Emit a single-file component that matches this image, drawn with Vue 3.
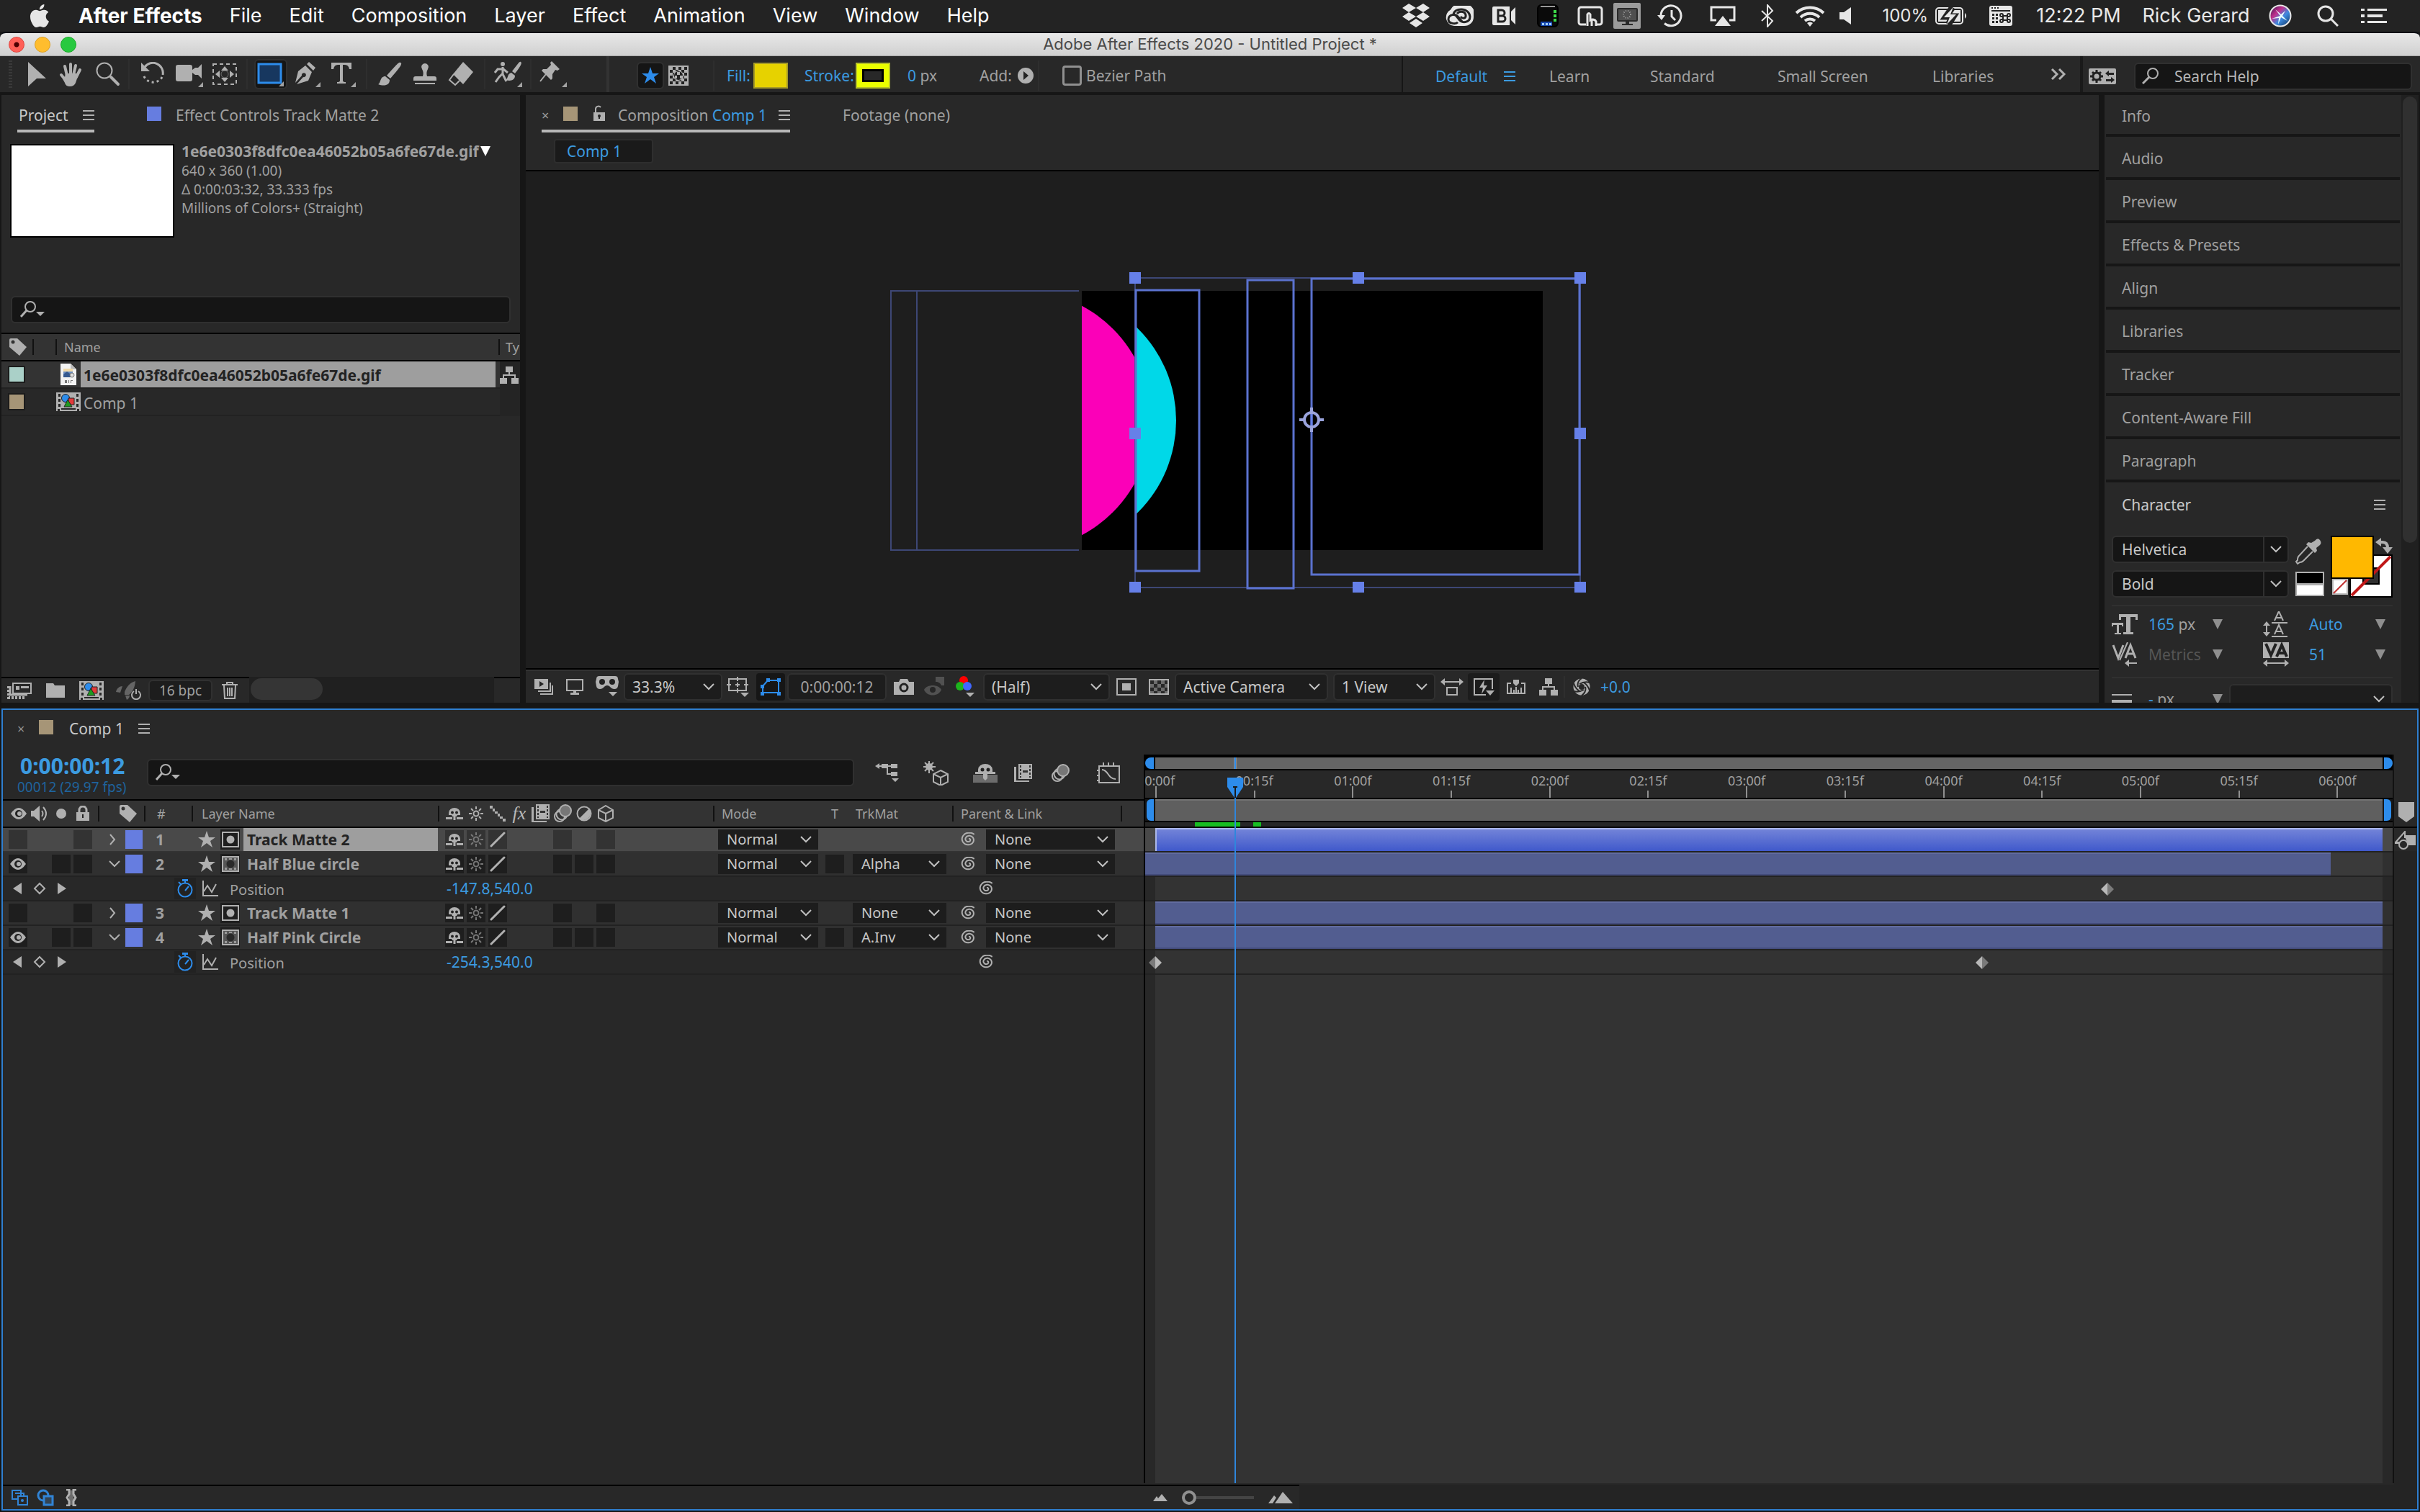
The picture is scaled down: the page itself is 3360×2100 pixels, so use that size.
<script setup>
import { h } from 'vue'

const S = 'fill="none" stroke="currentColor"'
const checker = (x, y, c, r, s) => {
  let out = ''
  for (let j = 0; j < r; j++)
    for (let i = 0; i < c; i++)
      if ((i + j) % 2) out += `<rect x="${x + i * s}" y="${y + j * s}" width="${s}" height="${s}"/>`
  return out
}
const spiral = (cx, cy, rx, ry, turns, end) => {
  const pts = []
  for (let i = 0; i <= 60; i++) {
    const f = 0.1 + (0.9 * i) / 60
    const a = end - (1 - i / 60) * turns * Math.PI * 2
    pts.push(`${(cx + Math.cos(a) * rx * f).toFixed(1)} ${(cy + Math.sin(a) * ry * f).toFixed(1)}`)
  }
  return 'M' + pts.join('L')
}
const corner = (x, y) => `<path d="M${x} ${y}v-7l-7 7z" opacity=".9"/>`
const film = '<path d="M0 0h34v26h-34z"/><path fill="#282828" d="M3 2h3v4h-3zM3 9h3v4h-3zM3 16h3v4h-3zM28 2h3v4h-3zM28 9h3v4h-3zM28 16h3v4h-3zM2 23h3v3h-3zM29 23h3v3h-3zM7 22h20v2h-20z"/><circle cx="13" cy="8" r="5.500" fill="#2d8ceb" stroke="#222"/><path fill="#e23b3b" stroke="#222" d="M17 8h8v9h-8z"/><path fill="#1f9a1f" stroke="#222" d="M16 10l6 10h-11z"/>'
const ghost = '<path d="M4 11V8a8 7 0 0 1 16 0v3h-4l-1 2h-1.500v5h-3v-5H9l-1-2z"/><path d="M0 14h9v3H0zM15 14h9v3h-9z"/><circle cx="9" cy="7.500" r="2" fill="#222"/><circle cx="15" cy="7.500" r="2" fill="#222"/>'
const sun = `<g ${S} stroke-width="2"><circle cx="10" cy="10" r="3.500"/><path d="M10 0v4M10 16v4M0 10h4M16 10h4M3 3l3 3M14 14l3 3M17 3l-3 3M6 14l-3 3"/></g>`
const blur = `<g ${S} stroke-width="2"><circle cx="9" cy="17" r="7"/><circle cx="12" cy="14" r="7.500"/></g><circle cx="17" cy="9" r="8" fill="#777" stroke="currentColor" stroke-width="2"/>`
const frames = '<path d="M7 0h19v21H7z"/><path d="M1 4h3v19h18v2H1z"/><path fill="#333" d="M9 2h2v3H9zM9 7h2v3H9zM9 12h2v3H9zM9 17h2v2H9zM22 2h2v3h-2zM22 7h2v3h-2zM22 12h2v3h-2zM22 17h2v2h-2zM13 9h7v3h-7z"/>'

const icons = {
  apple: [32, 32, '<g transform="scale(1.333)"><path d="M12.152 6.896c-.948 0-2.415-1.078-3.96-1.04-2.04.027-3.91 1.183-4.961 3.014-2.117 3.675-.546 9.103 1.519 12.09 1.013 1.454 2.208 3.09 3.792 3.039 1.52-.065 2.09-.987 3.935-.987 1.831 0 2.35.987 3.96.948 1.637-.026 2.676-1.48 3.676-2.948 1.156-1.688 1.636-3.325 1.662-3.415-.039-.013-3.182-1.221-3.22-4.857-.026-3.04 2.48-4.494 2.597-4.559-1.429-2.09-3.623-2.324-4.39-2.376-2-.156-3.675 1.09-4.61 1.09zM15.53 3.83c.843-1.012 1.4-2.427 1.245-3.83-1.207.052-2.662.805-3.532 1.818-.78.896-1.454 2.338-1.273 3.714 1.338.104 2.715-.688 3.559-1.701"/></g>'],
  dropbox: [38, 34, '<path d="M9 0l10 6-10 6-9-6zM29 0l9 6-9 6-10-6zM9 12l10 6-10 6-9-6zM29 12l9 6-9 6-10-6zM19 21l9 6-9 6-9-6z"/>'],
  cc: [40, 28, '<path d="M13 28a12 12 0 0 1-5-22.500A16 12 0 0 1 40 13v3a13 12 0 0 1-13 12z"/><g fill="none" stroke="#232323" stroke-width="3"><path d="M18 23c-3 3-13 2-13-4 0-7 10-9 14-3l5 6"/><path d="M12 13c0-11 22-11 23 2 0 9-12 10-16 3l-4-5"/><path d="M17 11c4-5 13-3 12 4-1 3-5 3-7 0"/></g>'],
  bomb: [32, 26, '<path d="M2 0h22v26H2a2 2 0 0 1-2-2V2a2 2 0 0 1 2-2zM26 7l6-6v24l-6-6z"/><path fill="none" stroke="#232323" stroke-width="3" d="M8 5v16h6a4 4 0 0 0 0-8h-6h5a4 4 0 0 0 0-8z"/>'],
  drive: [30, 32, '<rect x="1" y="1" width="28" height="30" rx="5" fill="#0a0a0a" stroke="#000" stroke-width="2"/><path fill="#999" d="M5 2h20v2H5z"/><path fill="#3ddc4a" d="M23 8h4v4h-4zM23 14h4v4h-4zM23 20h4v4h-4z"/><path fill="#1747b0" d="M5 24h16v6H5z"/><path fill="#9fd0ff" d="M7 26h3v3H7zM12 26h3v3h-3zM17 26h3v3h-3z"/>'],
  mfr: [36, 28, `<path ${S} stroke-width="3" d="M12 26H5a3 3 0 0 1-3-3V5a3 3 0 0 1 3-3h26a3 3 0 0 1 3 3v18a3 3 0 0 1-3 3h-4"/><path ${S} stroke-width="3" d="M14 28V12q2-3 4 0v8a5 4 0 0 1 8 2v6M20 20v8"/>`],
  display: [38, 36, '<rect width="38" height="36" rx="2" fill="#9b9b9b"/><rect x="6" y="8" width="27" height="17" rx="1" fill="#4f4f4f" stroke="#2a2a2a" stroke-width="2"/><path fill="#2a2a2a" d="M17 25h5v4h-5zM12 29h15v2H12z"/><circle cx="19" cy="16" r="5" fill="none" stroke="#aaa" stroke-width="2" stroke-dasharray="1 2"/>'],
  tmach: [36, 32, `<path ${S} stroke-width="3" d="M5 16a14 14 0 1 1 5 10.500M20 8v9l5 5"/><path d="M0 15h11l-5 7z"/>`],
  airplay: [36, 28, `<path ${S} stroke-width="3" d="M9 20H2V2h32v18h-7"/><path d="M18 14l11 14H7z"/>`],
  bt: [20, 32, `<path ${S} stroke-width="2" d="M2 9l15 14-7 8V1l7 8L2 23"/>`],
  wifi: [42, 30, `<g ${S} stroke-width="4"><path d="M2 11a28 28 0 0 1 38 0M8 17a19 19 0 0 1 26 0M14 22a11 11 0 0 1 14 0"/></g><path d="M17 25a6 6 0 0 1 8 0l-4 5z"/>`],
  vol: [18, 24, '<path d="M0 7h6l10-7v24l-10-7H0z"/>'],
  batt: [46, 26, `<rect x="2" y="2" width="37" height="22" rx="4" ${S} stroke-width="2"/><path d="M5 5h31v16H5z"/><path d="M42 9a5 5 0 0 1 0 8z"/><path fill="none" stroke="#232323" stroke-width="9" d="M25 1l-9 13h10l-7 11"/><path d="M26 1L13 15h8l-4 10 13-14h-8z"/>`],
  kbd: [32, 28, '<rect width="32" height="28" rx="3"/><path fill="#232323" d="M3 2h2v2H3zM7 2h2v2H7zM11 2h2v2h-2zM3 6h26v2H3zM4 11h3v3H4zM9 11h3v3H9zM4 16h3v3H4zM9 16h3v3H9zM4 21h3v3H4zM9 21h3v3H9z"/><path fill="none" stroke="#232323" stroke-width="2" d="M19 14h6v6h-6zM19 14v-1a2 2 0 1 0-2 2h2M25 14v-1a2 2 0 1 1 2 2h-2M19 20v1a2 2 0 1 1-2-2h2M25 20v1a2 2 0 1 0 2-2h-2"/>'],
  siri: [32, 32, '<defs><linearGradient id="sg" x1="0" y1="0" x2="1" y2="1"><stop offset="0" stop-color="#28104a"/><stop offset=".35" stop-color="#c2308c"/><stop offset=".6" stop-color="#3d8be0"/><stop offset="1" stop-color="#0b2a55"/></linearGradient></defs><circle cx="16" cy="16" r="14.500" fill="url(#sg)" stroke="#e8e8e8" stroke-width="2"/><path fill="#e9ffff" d="M16 16l-7-9 8 7 6-5-4 7 7 7-9-5-4 10 1-9-10 1z"/>'],
  spot: [30, 30, `<circle cx="12" cy="12" r="10" ${S} stroke-width="3"/><path ${S} stroke-width="3" d="M19 19l10 10"/>`],
  list: [36, 20, '<path d="M0 0h5v3H0zM9 0h27v3H9zM0 8h5v4H0zM9 8h21v4H9zM0 17h5v3H0zM9 17h27v3H9z"/>'],
  arrow: [26, 34, '<path d="M1 0L26 23H13L1 34z"/>'],
  hand: [32, 33, '<g fill="none" stroke="currentColor" stroke-width="4" stroke-linecap="round"><path d="M11 18L8 5M16 16V2M20 17L23 4M24 20L29 10M9 24L3 17"/></g><path d="M9 15h15l2 4-3 9q-2 5-8 5t-7-5l-5-9 5 1z"/>'],
  zoom: [34, 34, `<circle cx="12" cy="12" r="10.500" ${S} stroke-width="2"/><path ${S} stroke-width="4" stroke-linecap="round" d="M21 21l10 10"/>`],
  rotate: [34, 34, `<path ${S} stroke-width="3" d="M6 7a14 14 0 0 1 25 11"/><path d="M1 1v12h12z"/><path ${S} stroke-width="3" stroke-dasharray="3 4" d="M30 21a14 14 0 0 1-26-4"/>`],
  camera: [38, 36, '<path d="M3 5h17a3 3 0 0 1 3 3v4l4-3h4l5-5v20l-5-5h-4l-4-3v9a3 3 0 0 1-3 3H3a3 3 0 0 1-3-3V8a3 3 0 0 1 3-3z"/>' + corner(38, 36)],
  pan: [34, 30, `<rect x="1" y="1" width="32" height="28" ${S} stroke-width="2" stroke-dasharray="5 4"/><path d="M17 4l5 6H12zM17 26l5-6H12zM4 15l6-5v10zM30 15l-6-5v10z"/><circle cx="17" cy="15" r="5" fill="none" stroke="currentColor" opacity=".5"/>`],
  rect: [38, 34, '<rect x="2" y="3" width="31" height="26" fill="#17375f" stroke="#2d8ceb" stroke-width="3"/>' + corner(37, 34)],
  pen: [36, 36, '<path d="M20 1l9 8-3 4-9-9zM15 6l9 9-5 12L3 32 12 22a3 3 0 1 0-2-2L1 30 5 14z"/>' + corner(36, 36)],
  type: [34, 36, '<path d="M0 2h28v9h-3q-1-6-6-6h-3v22q0 2 4 2v2H8v-2q4 0 4-2V5H9Q4 5 3 11H0z"/>' + corner(34, 36)],
  brush: [34, 34, '<path d="M32 1c3 1 1 5-14 22l-5-4C28 2 30 0 32 1zM11 20l6 5c0 8-8 9-16 6 4-1 2-11 10-11z"/>'],
  stamp: [32, 32, '<path d="M16 1a5 5 0 0 1 4 8c-2 3-2 7-1 10h10a3 3 0 0 1 3 3v3H0v-3a3 3 0 0 1 3-3h10c1-3 1-7-1-10a5 5 0 0 1 4-8zM2 28h28v2H2z"/>'],
  eraser: [36, 34, `<path d="M21 0l14 14-14 17L7 17z"/><path ${S} stroke-width="2" d="M8 17l-6 8 8 7 6-6"/>`],
  roto: [40, 36, `<circle cx="13" cy="4" r="3"/><path ${S} stroke-width="3" d="M13 8v10l5 10M13 17l-5 5-5 7M2 16l4-5h8l6 5"/><path d="M38 1c2 1 1 5-8 16l-4-3C35 3 36 0 38 1zM25 16l5 4c0 7-7 8-13 6 4-2 2-9 8-10z"/>` + corner(40, 36)],
  pin: [38, 36, `<path d="M17 0l11 11-3 2-3-1-4 6v6l-2 2L3 13l2-2h5l6-6-1-3z"/><path ${S} stroke-width="2" d="M9 18L1 28"/>` + corner(38, 36)],
  star: [24, 24, '<path d="M12 0l3 9h9l-7 5 3 9-8-6-8 6 3-9-7-5h9z"/>'],
  maskopt: [28, 28, '<path d="M0 0h28v28H0z"/><g fill="#222">' + checker(2, 2, 6, 6, 4) + '</g><circle cx="14" cy="14" r="7" fill="#b0b0b0"/><circle cx="14" cy="14" r="6" fill="#222"/><path fill="#b0b0b0" d="M12 9h4v4h-4zM9 14h3v4H9zM16 14h4v4h-4z"/>'],
  add: [22, 22, '<circle cx="11" cy="11" r="11"/><path fill="#222" d="M8 5l7 6-7 6z"/>'],
  menu: [16, 16, '<path d="M0 1h16v2H0zM0 7h16v2H0zM0 13h16v2H0z"/>'],
  more: [22, 16, `<path ${S} stroke-width="3" d="M2 1l7 7-7 7M12 1l7 7-7 7"/>`],
  sync: [38, 22, '<rect width="38" height="22" rx="2"/><circle cx="11" cy="11" r="5" fill="none" stroke="#222" stroke-width="3"/><path stroke="#222" stroke-width="3" d="M11 2v4M11 16v4M2 11h4M16 11h4M5 5l3 3M14 14l3 3M17 5l-3 3M5 17l3-3"/><path fill="#222" d="M23 7l5-4v3h7v3h-7v2zM36 16l-5-4v3h-7v3h7v2z"/>'],
  find: [24, 24, `<circle cx="15" cy="8" r="7" ${S} stroke-width="2"/><path ${S} stroke-width="3" d="M10 13L1 22"/>`],
  findm: [34, 24, `<circle cx="14" cy="8" r="7" ${S} stroke-width="2"/><path ${S} stroke-width="3" d="M9 13L1 22"/><path d="M22 15h12l-6 6z"/>`],
  lockopen: [16, 22, `<path d="M0 10h16v12H0z"/><path ${S} stroke-width="2" d="M3 10V6a4 4 0 0 1 7-3"/><circle cx="8" cy="15" r="2" fill="#222"/><path fill="#222" d="M7 15h2v4H7z"/>`],
  lock: [18, 22, `<path d="M0 9h18v12H0z"/><path ${S} stroke-width="3" d="M4 9V6a5 5 0 0 1 10 0v3"/><path fill="#222" d="M8 12h2v5H8z"/>`],
  tag: [24, 24, '<path d="M0 2a2 2 0 0 1 2-2h9l13 12-10 12L0 12z"/><circle cx="5" cy="5" r="2.500" fill="#333"/>'],
  gif: [22, 30, '<path fill="#f2f2f2" d="M0 0h14l8 8v22H0z"/><path fill="#bbb" d="M14 0l8 8h-8z"/><path fill="#6b8fc4" d="M4 7h13v12H4z"/><path fill="#f0d9a8" d="M4 7h13v4H4z"/><path fill="#35598f" d="M4 15l5-4 8 6v2H4z"/><circle cx="16" cy="16" r="3" fill="#ddd" stroke="#777"/><path fill="#777" d="M6 23h3v4H6zM11 23h1v4h-1zM14 23h3v1h-2v3h-1z"/>'],
  comp: [34, 26, film],
  tree: [26, 24, `<path d="M8 0h10v8H8zM0 16h10v8H0zM16 16h10v8H16z"/><path ${S} stroke-width="2" d="M13 8v4M5 17v-5h16v5"/>`],
  interpret: [34, 24, `<path ${S} stroke-width="2" d="M8 2h25v14H8z"/><path d="M12 6h5v5h-5zM19 6h11v3H19z"/><path ${S} stroke-width="3" d="M4 6v12h24" /><path ${S} stroke-width="4" stroke-dasharray="3 2" d="M2 6v16h22"/>`],
  folder: [26, 20, '<path d="M0 0h10l2 3h14v17H0z"/>'],
  rocket: [36, 26, `<path opacity=".45" d="M27 0c-1 10-4 15-9 19h-6v-4c2-6 7-13 15-15zM0 15c1-5 5-8 9-8l-3 9zM15 26c2-1 4-3 4-6h-6z"/><path ${S} stroke-width="2" d="M25 14a6 6 0 1 0 6 0M28 11v7"/>`],
  trash: [22, 24, `<path ${S} stroke-width="2" d="M0 4h22M7 4V1h8v3M3 5l1 18h14l1-18M8 8v12M11 8v12M14 8v12"/>`],
  always: [26, 22, '<path d="M0 0h19v14H0z"/><path fill="#222" d="M7 3l6 4-6 4z"/><path fill="none" stroke="currentColor" stroke-width="2" d="M5 17h17V5M8 21h17V9"/>'],
  monitor: [26, 22, `<rect x="2" y="1" width="22" height="15" ${S} stroke-width="2"/><path d="M11 17h4v2h4v3H7v-3h4z"/>`],
  vr: [32, 30, '<path d="M5 0h22a4 4 0 0 1 4 4l1 4-1 6a5 5 0 0 1-5 4c-5 0-6-5-10-5s-5 5-10 5a5 5 0 0 1-5-4L0 8l1-4a4 4 0 0 1 4-4z"/><circle cx="9" cy="8" r="4" fill="#222"/><circle cx="23" cy="8" r="4" fill="#222"/><path d="M18 22h12l-6 6z"/>'],
  guides: [32, 28, `<path ${S} stroke-width="2" d="M3 3h24v16H3zM15 0v6M15 16v6M0 11h6M24 11h6M15 8v6M12 11h6"/><path d="M19 22h12l-6 6z"/>`],
  roi: [28, 24, '<path fill="none" stroke="currentColor" stroke-width="2" d="M10 3h15v17H3v-9z"/><path d="M8 0h5v5H8zM23 0h5v5h-5zM0 9h5v5H0zM0 19h5v5H0zM23 19h5v5h-5z"/>'],
  snap: [28, 22, '<path d="M0 4h7l2-4h10l2 4h7v18H0z"/><circle cx="14" cy="12" r="5" fill="none" stroke="#222" stroke-width="3"/>'],
  shsnap: [30, 28, '<g opacity=".3"><path d="M16 0h12v12h-4c-1-3-4-5-8-5zM0 18c4-8 20-8 24 0-4 10-20 10-24 0z"/><circle cx="12" cy="18" r="4" fill="#222"/></g>'],
  rgb: [28, 30, '<circle cx="11" cy="6" r="6" fill="#f00"/><circle cx="6" cy="14" r="6" fill="#1db31d"/><circle cx="16" cy="14" r="6" fill="#4167ff"/><path d="M14 23h12l-6 6z"/>'],
  region: [28, 24, `<path ${S} stroke-width="2" d="M1 1h26v22H1z"/><path d="M8 7h12v10H8z"/>`],
  grid: [28, 22, `<rect x="1" y="1" width="26" height="20" ${S} stroke-width="2"/><g opacity=".5">` + checker(2, 2, 5, 4, 5) + '</g>'],
  parc: [32, 24, `<path d="M0 5l6-5v4h20V0l6 5-6 5V6H6v4z"/><rect x="9" y="13" width="14" height="10" ${S} stroke-width="2"/>`],
  fast: [30, 26, `<path ${S} stroke-width="2" d="M18 24H2V2h25v14"/><path d="M16 3l-7 11h5l-2 9 8-12h-5zM18 18h12l-6 7z"/>`],
  flow: [26, 20, `<path ${S} stroke-width="2" d="M6 5H1v14h24V5h-5M6 11v8M10 14v5M13 10v9M16 14v5M20 11v8"/><path d="M9 0h8v5l-4 4-4-4z"/>`],
  aperture: [26, 24, '<circle cx="13" cy="12" r="11.500"/><g fill="none" stroke="#282828" stroke-width="2"><path d="M13 0q-7 5-5 12M24 6q-7-2-14 2M24 17q-2-7-8-11M13 24q7-5 5-12M2 18q7 2 14-2M2 7q2 7 8 11"/></g><circle cx="13" cy="12" r="4" fill="#282828"/>'],
  mini: [36, 28, `<path d="M0 4l6-4v8zM9 1h9v6H9zM22 1h9v6h-9zM22 12h9v6h-9zM23 21h10l-5 5z"/><path ${S} stroke-width="2" d="M5 4h17M17 5v10h6"/>`],
  draft: [36, 34, `<path ${S} stroke-width="2" d="M24 13l10 5v11l-10 5-10-5V18zM14 18l10 5 10-5M24 23v10"/><path stroke="currentColor" stroke-width="2" d="M8 0v17M0 8h17M2 2l12 12M14 2L2 14"/><circle cx="8" cy="8" r="5"/>`],
  shyg: [34, 26, '<path opacity=".5" d="M0 15h34v11H0z"/><path d="M7 11V8a10 8 0 0 1 20 0v3h4v3h-11v6l-3 3-3-3v-6H3v-3z"/><circle cx="13" cy="8" r="2.500" fill="#222"/><circle cx="21" cy="8" r="2.500" fill="#222"/>'],
  frames: [28, 26, frames],
  blur: [27, 26, blur],
  graph: [34, 30, `<rect x="3" y="5" width="28" height="23" ${S} stroke-width="2"/><path ${S} stroke-width="2" d="M9 0v5M16 0v5M23 0v5M0 11h3M0 18h3M0 25h3M7 10c9 0 8 13 19 13"/>`],
  eye: [22, 16, '<path d="M0 8q11-16 22 0-11 16-22 0z"/><circle cx="11" cy="8" r="5" fill="#222"/><circle cx="12" cy="8" r="3"/>'],
  speaker: [24, 22, `<path d="M0 7h4l8-7v22l-8-7H0z"/><path ${S} stroke-width="2" d="M15 7q3 4 0 8M17 2q8 9 0 18"/>`],
  dot: [14, 14, '<circle cx="7" cy="7" r="7"/>'],
  ghost: [24, 18, ghost],
  sun: [20, 20, sun],
  steps: [22, 22, '<path d="M0 0h4v4H0zM4 4h3v4H4zM7 8h4v3H7zM11 11h3v4h-3zM14 15h4v3h-4zM18 18h4v4h-4z"/>'],
  half: [22, 22, `<circle cx="11" cy="11" r="9.500" ${S} stroke-width="2"/><path d="M18 4A10 10 0 0 1 4 18z"/>`],
  cube: [24, 24, `<path ${S} stroke-width="2" d="M12 1l10 6v11l-10 5-10-5V7zM2 7l10 5 10-5M12 12v11"/>`],
  slash: [22, 22, `<path ${S} stroke-width="3" stroke-linecap="round" d="M2 20L20 2"/>`],
  right: [10, 16, `<path ${S} stroke-width="2" d="M2 1l6 7-6 7"/>`],
  down: [16, 10, `<path ${S} stroke-width="2" d="M1 1l7 7 7-7"/>`],
  matte: [24, 22, `<path ${S} stroke-width="2" d="M1 1h22v20H1z"/><circle cx="12" cy="11" r="5.500"/>`],
  matted: [24, 22, '<rect x="1" y="1" width="22" height="20" fill="#555" stroke="currentColor" stroke-width="2"/><path fill="#999" d="M4 3h3v3H4zM17 3h3v3h-3zM4 16h3v3H4zM17 16h3v3h-3zM10 3h4v2h-4zM10 17h4v2h-4z"/><circle cx="12" cy="11" r="5.500" fill="#2a2a2a"/>'],
  prev: [12, 16, '<path d="M12 0v16L0 8z"/>'],
  next: [12, 16, '<path d="M0 0v16l12-8z"/>'],
  key: [18, 18, `<path ${S} stroke-width="2" d="M9 2l7 7-7 7-7-7z"/>`],
  watch: [24, 26, `<circle cx="12" cy="15" r="9.500" ${S} stroke-width="2"/><path ${S} stroke-width="2" d="M12 16l5-6M3 4l3 3M12 3v3"/><path d="M8 0h8v3H8z"/>`],
  curve: [22, 22, `<path ${S} stroke-width="2" d="M1 0v21h21M2 15l5-8 6 9 6-11"/>`],
  swirl: [24, 20, `<path ${S} stroke-width="2" d="${spiral(12, 10, 11, 10, 2.1, -0.8)}"/>`],
  kf1: [18, 18, '<path fill="#b8b8b8" d="M9 0v18L0 9z"/><path fill="#7a7a7a" d="M9 0v18l9-9z"/>'],
  kf2: [18, 18, '<path fill="#7a7a7a" d="M9 0v18L0 9z"/><path fill="#b8b8b8" d="M9 0v18l9-9z"/>'],
  head: [22, 28, '<path fill="#2d8ceb" d="M0 0h22v13L12 28h-2L0 13z"/><path fill="#1a1a1a" d="M8 12h6v2h-2v14h-2V14H8z"/>'],
  marker: [22, 28, '<path d="M0 0h22v20l-11 8L0 20z"/>'],
  cpick: [30, 26, `<path d="M14 6h16v14H20z"/><path ${S} stroke-width="2" d="M2 16L15 1v9"/><path d="M1 15h12v3H1z"/><circle cx="13" cy="19" r="6" fill="#282828" stroke="currentColor" stroke-width="2"/>`],
  dropper: [36, 36, `<path d="M27 3q4-5 7-1t0 7l-5 4 1 4-3 3L15 8l3-3 4 1z"/><path ${S} stroke-width="2" d="M17 11L4 25q-1 2-1 5l-2 2 2 3 3-2q3 0 5-2l13-13"/>`],
  bw: [40, 34, '<path d="M0 0h40v34H0z"/><path fill="#000" d="M2 2h36v14H2z"/><path fill="#fff" d="M2 19h36v13H2z"/>'],
  swap: [24, 22, `<path ${S} stroke-width="4" d="M6 6h4q7 0 7 8"/><path d="M8 0v12L0 6zM10 13h14l-7 9z"/>`],
  none: [22, 22, '<rect x="1" y="1" width="20" height="20" fill="#fff" stroke="#bbb" stroke-width="2"/><path stroke="#c03030" stroke-width="2" d="M2 20L20 2"/>'],
  size: [36, 28, '<path d="M10 0h26v8h-3V4h-7v21h4v3H16v-3h4V4h-7v4h-3zM0 12h16v5h-2v-2h-4v11h3v2H4v-2h3V15H2v2H0z"/>'],
  kern: [36, 34, `<path ${S} stroke-width="3" d="M2 4l7 18 7-18M19 22l7-18 7 18M22 16h9"/><path ${S} stroke-width="2" d="M22 0L11 25M22 29h13"/><path d="M18 29l6-5v10z"/>`],
  lead: [34, 36, `<path ${S} stroke-width="2" d="M16 13l6-13 6 13M18 9h8M12 16h22M16 32l6-13 6 13M18 28h8M12 35h22M5 18v14"/><path d="M0 20l5-6 5 6zM0 29l5 6 5-6z"/>`],
  track: [36, 34, `<path d="M0 0h36v22H0z"/><path fill="none" stroke="#222" stroke-width="4" d="M4 2l7 16 7-16M19 20l7-16 7 16M22 15h9"/><path d="M0 29l6-5v4h24v-4l6 5-6 5v-4H6v4z"/>`],
  lines: [28, 14, '<path d="M0 0h28v2H0zM0 8h28v4H0z"/>'],
  tri: [14, 14, '<path d="M0 0h14L7 14z"/>'],
  toggle1: [24, 24, `<path ${S} stroke-width="2" d="M2 2h12v12H2zM6 6h12v12"/><rect x="10" y="10" width="13" height="12" fill="#282828" stroke="currentColor" stroke-width="2"/><circle cx="16" cy="16" r="2"/>`],
  toggle2: [24, 24, `<circle cx="9" cy="9" r="7" ${S} stroke-width="3"/><rect x="10" y="10" width="12" height="12" fill="#345" stroke="currentColor" stroke-width="3"/>`],
  toggle3: [24, 24, `<path opacity=".5" d="M9 2h6v20H9z"/><path ${S} stroke-width="3" d="M5 1h4v6l-3 5 3 5v6H5M19 1h-4v6l3 5-3 5v6h4"/>`],
  mtS: [20, 10, '<path d="M0 10l5-7 2 3 5-6 8 10z"/>'],
  mtL: [34, 16, '<path d="M0 16l8-11 3 3-5 8zM9 16L20 0l14 16z"/>'],
}

const Icon = (p) => {
  const [w, hh, body] = icons[p.n]
  return h('svg', { width: w, height: hh, viewBox: `0 0 ${w} ${hh}`, fill: 'currentColor', 'aria-hidden': 'true', innerHTML: body })
}
Icon.props = ['n']

const menus = ['File', 'Edit', 'Composition', 'Layer', 'Effect', 'Animation', 'View', 'Window', 'Help']
const status = ['dropbox', 'cc', 'bomb', 'drive', 'mfr', 'display', 'tmach', 'airplay', 'bt', 'wifi', 'vol']
const tools = ['arrow', 'hand', 'zoom', '', 'rotate', 'camera', 'pan', '', 'rect', 'pen', 'type', '', 'brush', 'stamp', 'eraser', '', 'roto', '', 'pin']
const workspaces = ['Learn', 'Standard', 'Small Screen', 'Libraries']
const panels = ['Info', 'Audio', 'Preview', 'Effects & Presets', 'Align', 'Libraries', 'Tracker', 'Content-Aware Fill', 'Paragraph']
const switchHeads = ['ghost', 'sun', 'steps', 'fx', 'frames', 'blur', 'half', 'cube']

const rows = [
  { n: 1, name: 'Track Matte 2', matte: true, selected: true, bar: [0, 100] },
  { n: 2, name: 'Half Blue circle', visible: true, open: true, trk: 'Alpha', early: true, bar: [0, 95.8] },
  { prop: true, id: 'b', value: '-147.8,540.0', keys: [['kf1', 77.6]] },
  { n: 3, name: 'Track Matte 1', matte: true, trk: 'None', bar: [0, 100] },
  { n: 4, name: 'Half Pink Circle', visible: true, open: true, trk: 'A.Inv', bar: [0, 100] },
  { prop: true, id: 'p', value: '-254.3,540.0', keys: [['kf2', 0], ['kf1', 67.4]] },
]

const duration = 6.233
const ticks = Array.from({ length: 13 }, (_, i) => ({
  label: `0${Math.floor(i / 2)}:${i % 2 ? '15' : '00'}f`,
  half: i % 2 === 1,
  left: (i / 2 / duration) * 100,
}))
const playhead = 6.5
const cached = [[3.2, 3.7], [8, 0.6]]
const handles = [[1576, 386], [1886, 386], [2194, 386], [1576, 602], [2194, 602], [1576, 816], [1886, 816], [2194, 816]]
</script>

<template>
  <div class="app">
    <header class="menubar">
      <nav>
        <button class="apple" aria-label="Apple menu"><Icon n="apple" /></button>
        <button class="strong">After Effects</button>
        <button v-for="m in menus" :key="m">{{ m }}</button>
      </nav>
      <div class="status">
        <Icon v-for="s in status" :key="s" :n="s" />
        <span class="pct">100%</span>
        <Icon n="batt" />
        <Icon n="kbd" />
        <span class="clock">12:22 PM</span>
        <span class="clock">Rick Gerard</span>
        <Icon n="siri" />
        <Icon n="spot" />
        <Icon n="list" />
      </div>
    </header>

    <div class="titlebar">
      <div class="lights"><i class="red"></i><i class="amber"></i><i class="green"></i></div>
      <h1>Adobe After Effects 2020 - Untitled Project *</h1>
    </div>

    <div class="toolbar">
      <div class="tools">
        <span class="grip"></span>
        <template v-for="(t, i) in tools" :key="i">
          <button v-if="t" :class="{ on: t === 'rect' }" :aria-label="t"><Icon :n="t" /></button>
          <span v-else class="sep"></span>
        </template>
      </div>
      <div class="options">
        <button class="starbtn" aria-label="Create shape"><Icon n="star" /></button>
        <button class="maskbtn" aria-label="Create mask"><Icon n="maskopt" /></button>
        <span class="sep"></span>
        <div class="fields">
          <a href="#fill">Fill:</a><button class="fill" aria-label="Fill color"></button>
          <a href="#stroke" class="strk">Stroke:</a><button class="stroke" aria-label="Stroke color"><i></i></button>
          <span class="width"><a href="#width">0</a> px</span>
          <span>Add:</span><button aria-label="Add"><Icon n="add" /></button>
          <span class="sep"></span>
          <input id="bezier" type="checkbox" />
          <label for="bezier">Bezier Path</label>
        </div>
      </div>
      <div class="spaces">
        <button class="cur">Default</button>
        <button class="curm" aria-label="Workspace menu"><Icon n="menu" /></button>
        <button v-for="w in workspaces" :key="w">{{ w }}</button>
        <button class="morebtn" aria-label="More workspaces"><Icon n="more" /></button>
        <span class="sep"></span>
        <button class="sync" aria-label="Sync settings"><Icon n="sync" /></button>
        <label class="field help"><Icon n="find" /><input placeholder="Search Help" aria-label="Search Help" /></label>
      </div>
    </div>

    <div class="upper">
      <section class="panel project">
        <div class="tabs">
          <div class="tab active">Project <Icon n="menu" /></div>
          <div class="tab fx"><i class="sw blue"></i>Effect Controls Track Matte 2</div>
        </div>
        <div class="info">
          <div class="thumb"></div>
          <div class="meta">
            <b>1e6e0303f8dfc0ea46052b05a6fe67de.gif<Icon n="tri" /></b>
            <p>640 x 360 (1.00)</p>
            <p>Δ 0:00:03:32, 33.333 fps</p>
            <p>Millions of Colors+ (Straight)</p>
          </div>
        </div>
        <label class="field psearch"><Icon n="findm" /><input aria-label="Search project" /></label>
        <div class="items">
          <table>
            <colgroup><col class="c1" /><col class="c2" /><col /><col class="c4" /></colgroup>
            <thead>
              <tr><th class="bar"><Icon n="tag" /></th><th class="bar"></th><th class="bar nm">Name</th><th class="ty">Ty</th></tr>
            </thead>
            <tbody>
              <tr class="sel">
                <td><i class="lab mint"></i></td>
                <td colspan="2"><div class="file"><span class="ic"><Icon n="gif" /></span><b>1e6e0303f8dfc0ea46052b05a6fe67de.gif</b></div></td>
                <td class="edge"><Icon n="tree" /></td>
              </tr>
              <tr>
                <td><i class="lab tan"></i></td>
                <td colspan="2"><div class="file"><span class="ic"><Icon n="comp" /></span><span class="txt">Comp 1</span></div></td>
                <td class="edge"></td>
              </tr>
            </tbody>
          </table>
        </div>
        <div class="pfoot">
          <div class="pbtns">
            <button aria-label="Interpret footage"><Icon n="interpret" /></button>
            <button aria-label="New folder"><Icon n="folder" /></button>
            <button aria-label="New composition"><Icon n="comp" /></button>
            <button aria-label="Project settings"><Icon n="rocket" /></button>
            <button class="bpc">16 bpc</button>
            <button aria-label="Delete"><Icon n="trash" /></button>
          </div>
          <div class="hscroll"><i></i></div>
          <div class="pend"></div>
        </div>
      </section>

      <section class="panel comp">
        <div class="tabs">
          <div class="tab active ctab"><span class="x">×</span><i class="sw tan"></i><Icon n="lockopen" /><span>Composition <a href="#comp">Comp 1</a></span><Icon n="menu" /></div>
          <div class="tab ftab">Footage (none)</div>
        </div>
        <div class="crumbs"><button>Comp 1</button></div>
        <div class="viewer">
          <svg width="1200" height="480" viewBox="1222 343 1200 480">
            <defs>
              <clipPath id="cp"><rect x="1502" y="404" width="75" height="360" /></clipPath>
              <clipPath id="cb"><rect x="1577" y="404" width="100" height="360" /></clipPath>
            </defs>
            <rect x="1502" y="404" width="640" height="360" fill="#000" />
            <circle cx="1418" cy="584" r="180" fill="#fb00b8" clip-path="url(#cp)" />
            <circle cx="1453" cy="584" r="180" fill="#00d8e8" clip-path="url(#cb)" />
            <g fill="none" stroke="#3d4775" stroke-width="2">
              <path d="M1498 404H1237V764H1498" />
              <path d="M1273 404V764" />
              <path d="M1576 386H2194V816H1576Z" />
            </g>
            <g fill="none" stroke="#5b72cf" stroke-width="3">
              <rect x="1577" y="403" width="88" height="390" />
              <rect x="1732" y="389" width="64" height="428" />
              <rect x="1821" y="387" width="372" height="411" />
            </g>
            <g fill="#6680e8">
              <rect v-for="(p, i) in handles" :key="i" :x="p[0] - 8" :y="p[1] - 8" width="16" height="16" />
            </g>
            <g fill="none" stroke="#9aa3dc" stroke-width="4">
              <circle cx="1821" cy="583" r="10" />
              <path d="M1821 566v9M1821 591v9M1804 583h9M1829 583h9" />
            </g>
            <path d="M1821 575v16" stroke="#6680e8" stroke-width="3" />
          </svg>
        </div>
        <div class="cfoot">
          <button aria-label="Always preview"><Icon n="always" /></button>
          <button aria-label="Main viewer"><Icon n="monitor" /></button>
          <button aria-label="Immersive video"><Icon n="vr" /></button>
          <select aria-label="Magnification"><option>33.3%</option></select>
          <button aria-label="Grid and guides"><Icon n="guides" /></button>
          <button class="dark" aria-label="Mask visibility"><Icon n="roi" /></button>
          <button class="time">0:00:00:12</button>
          <button aria-label="Take snapshot"><Icon n="snap" /></button>
          <button aria-label="Show snapshot"><Icon n="shsnap" /></button>
          <button aria-label="Channels"><Icon n="rgb" /></button>
          <select aria-label="Resolution"><option>(Half)</option></select>
          <button aria-label="Region of interest"><Icon n="region" /></button>
          <button aria-label="Transparency grid"><Icon n="grid" /></button>
          <select aria-label="3D view"><option>Active Camera</option></select>
          <select class="gapl" aria-label="View layout"><option>1 View</option></select>
          <button aria-label="Pixel aspect ratio"><Icon n="parc" /></button>
          <button class="dk2" aria-label="Fast previews"><Icon n="fast" /></button>
          <button aria-label="Timeline"><Icon n="flow" /></button>
          <button aria-label="Flowchart"><Icon n="tree" /></button>
          <button class="ap" aria-label="Reset exposure"><Icon n="aperture" /></button>
          <a href="#exposure">+0.0</a>
        </div>
      </section>

      <aside class="side">
        <div class="panel stack">
          <button v-for="p in panels" :key="p" class="fold">{{ p }}</button>
          <div class="chead"><span>Character</span><Icon n="menu" /></div>
          <div class="char">
            <div class="fonts">
              <div class="selects">
                <select class="fsel" aria-label="Font family"><option>Helvetica</option></select>
                <select class="fsel" aria-label="Font style"><option>Bold</option></select>
              </div>
              <div class="picks"><Icon n="dropper" /><Icon n="bw" /></div>
              <div class="swatches">
                <svg class="outline" width="60" height="60" viewBox="0 0 60 60"><rect x="1" y="1" width="58" height="58" fill="#fff" stroke="#000" stroke-width="2" /><rect x="19" y="19" width="22" height="22" fill="#303030" stroke="#000" stroke-width="2" /><path d="M3 57L57 3" stroke="#c01818" stroke-width="4" /></svg>
                <i class="solid"></i>
                <Icon n="swap" class="swap" />
                <Icon n="none" class="none" />
              </div>
            </div>
            <div class="vals top">
              <Icon n="size" /><span><a href="#size">165</a> px</span><Icon n="tri" />
              <Icon n="lead" /><a href="#leading">Auto</a><Icon n="tri" />
            </div>
            <div class="vals">
              <Icon n="kern" /><span class="dim">Metrics</span><Icon n="tri" />
              <Icon n="track" /><a href="#tracking">51</a><Icon n="tri" />
            </div>
            <div class="vals last">
              <Icon n="lines" /><span><a href="#strokewidth">-</a> px</span><Icon n="tri" />
              <select aria-label="Stroke order"></select>
            </div>
          </div>
        </div>
        <div class="vscroll"><i></i></div>
      </aside>
    </div>

    <section class="timeline">
      <div class="tbody">
        <div class="left">
          <div class="ttab"><span class="x">×</span><i class="sw tan"></i><span>Comp 1</span><Icon n="menu" /></div>
          <div class="tctl">
            <div class="tc"><b>0:00:00:12</b><span>00012 (29.97 fps)</span></div>
            <label class="field tsearch"><Icon n="findm" /><input aria-label="Search layers" /></label>
            <div class="tbtns">
              <button aria-label="Mini flowchart"><Icon n="mini" /></button>
              <button aria-label="Draft 3D"><Icon n="draft" /></button>
              <button aria-label="Shy layers"><Icon n="shyg" /></button>
              <button aria-label="Frame blending"><Icon n="frames" /></button>
              <button aria-label="Motion blur"><Icon n="blur" /></button>
              <button aria-label="Graph editor"><Icon n="graph" /></button>
            </div>
          </div>
          <table class="layers">
            <colgroup>
              <col class="l1" /><col class="l2" /><col class="l2" /><col class="l3" /><col class="l4" /><col class="l5" />
              <col class="l6" /><col class="l7" /><col class="l8" /><col class="l9" /><col class="l10" /><col />
            </colgroup>
            <thead>
              <tr>
                <th class="ctr"><Icon n="eye" /></th><th class="ctr"><Icon n="speaker" /></th><th class="ctr"><Icon n="dot" /></th>
                <th class="bar lk"><Icon n="lock" /></th><th class="bar tg"><Icon n="tag" /></th><th class="bar num">#</th>
                <th class="bar ln">Layer Name</th>
                <th class="bar"><div class="sws"><template v-for="s in switchHeads" :key="s"><em v-if="s === 'fx'">fx</em><Icon v-else :n="s" /></template></div></th>
                <th class="md">Mode</th><th class="ctr">T</th><th class="bar md">TrkMat</th><th class="pl"><span>Parent &amp; Link</span></th>
              </tr>
            </thead>
            <tbody>
              <template v-for="(r, i) in rows" :key="i">
                <tr v-if="!r.prop" :class="{ sel: r.selected }">
                  <td><button class="box e" aria-label="Video"><Icon v-if="r.visible" n="eye" /></button></td>
                  <td></td>
                  <td><button v-if="r.visible" class="box s" aria-label="Solo"></button></td>
                  <td><button class="box s" aria-label="Lock"></button></td>
                  <td><div class="lbl"><Icon :n="r.open ? 'down' : 'right'" /><i></i></div></td>
                  <td class="no">{{ r.n }}</td>
                  <td><div class="lname"><Icon n="star" /><span class="mk"><Icon :n="r.matte ? 'matte' : 'matted'" /></span><b>{{ r.name }}</b></div></td>
                  <td>
                    <div class="sws">
                      <button class="box" aria-label="Shy"><Icon n="ghost" /></button>
                      <button class="box dimmed" aria-label="Collapse"><Icon n="sun" /></button>
                      <button class="box" aria-label="Quality"><Icon n="slash" /></button>
                      <span></span><span></span>
                      <button class="box" aria-label="Motion blur"></button>
                      <button v-if="r.visible" class="box" aria-label="Adjustment layer"></button><span v-else></span>
                      <button class="box" aria-label="3D layer"></button>
                    </div>
                  </td>
                  <td><select class="mode" :aria-label="'Mode ' + r.n"><option>Normal</option></select></td>
                  <td><button v-if="r.visible" class="box t" aria-label="Preserve transparency"></button></td>
                  <td><select v-if="r.trk" class="trk" :aria-label="'Track matte ' + r.n"><option>{{ r.trk }}</option></select></td>
                  <td><div class="par"><Icon n="swirl" /><select :aria-label="'Parent ' + r.n"><option>None</option></select></div></td>
                </tr>
                <tr v-else class="prop">
                  <td colspan="4"><div class="nav"><Icon n="prev" /><Icon n="key" /><Icon n="next" /></div></td>
                  <td></td>
                  <td colspan="2"><div class="pname"><span class="sw8"><Icon n="watch" /></span><Icon n="curve" /><span>Position</span></div></td>
                  <td class="val"><a :href="'#position-' + r.id">{{ r.value }}</a></td>
                  <td colspan="3"></td>
                  <td><div class="par pr"><Icon n="swirl" /></div></td>
                </tr>
              </template>
            </tbody>
          </table>
        </div>

        <div class="right">
          <div class="navbar"><div class="span"><i class="now" :style="{ left: playhead + '%' }"></i></div></div>
          <div class="ruler">
            <div class="inner">
              <span v-for="t in ticks" :key="t.label" class="tick" :class="{ half: t.half }" :style="{ left: t.left + '%' }">{{ t.label }}</span>
            </div>
          </div>
          <div class="work"><div class="span"></div></div>
          <div class="cache"><div class="inner"><i v-for="c in cached" :key="c[0]" :style="{ left: c[0] + '%', width: c[1] + '%' }"></i></div></div>
          <div class="tracks">
            <div v-for="(r, i) in rows" :key="i" class="row" :class="{ sel: r.selected, lay: !r.prop }">
              <div class="inner">
                <i v-if="r.bar" class="clip" :class="{ early: r.early }" :style="{ right: 100 - r.bar[1] + '%' }"></i>
                <Icon v-for="k in r.keys" :key="k[1]" :n="k[0]" class="kf" :style="{ left: k[1] + '%' }" />
              </div>
            </div>
            <div class="rest"><div class="inner"></div></div>
          </div>
          <div class="over"><div class="line" :style="{ left: playhead + '%' }"><Icon n="head" /></div></div>
        </div>
        <div class="gutter"><div class="g1"><Icon n="marker" /></div><div class="g2"><Icon n="cpick" /></div></div>
      </div>
      <div class="tfoot">
        <div class="tf1">
          <button aria-label="Layer switches"><Icon n="toggle1" /></button>
          <button aria-label="Transfer controls"><Icon n="toggle2" /></button>
          <button class="g" aria-label="In and out"><Icon n="toggle3" /></button>
          <div class="zoomer"><Icon n="mtS" /><input type="range" min="0" max="100" value="0" aria-label="Zoom" /><Icon n="mtL" /></div>
        </div>
      </div>
    </section>
  </div>
</template>

<style>
html, body { margin: 0; background: #161616; }
</style>

<style scoped>
* { box-sizing: border-box; }
.app { min-height: 100vh; height: 100vh; overflow: hidden; display: grid; grid-template-rows: auto auto auto minmax(0, 856fr) minmax(0, 1116fr); grid-template-columns: minmax(0, 1fr); background: #161616; color: #a0a0a0; font: 21px/26px "Noto Sans", sans-serif; }
button, input, select { font: inherit; color: inherit; background: none; border: 0; margin: 0; padding: 0; outline: 0; border-radius: 0; }
button { display: flex; align-items: center; justify-content: center; white-space: nowrap; }
a { color: #3c9be0; text-decoration: none; }
svg { display: block; flex: none; color: #b0b0b0; }
table { border-spacing: 0; table-layout: fixed; width: 100%; }
td, th { padding: 0; }
p, h1 { margin: 0; }
select { appearance: none; color: #c8c8c8; background: #1d1d1d url("data:image/svg+xml,%3Csvg xmlns='http://www.w3.org/2000/svg' width='16' height='10'%3E%3Cpath d='M1 1l7 7 7-7' fill='none' stroke='%23c0c0c0' stroke-width='2'/%3E%3C/svg%3E") no-repeat right 9px center; }

.menubar { height: 44px; background: #232323; color: #fff; display: flex; justify-content: space-between; font: 27px/44px Inter, sans-serif; }
.menubar svg { color: #e6e6e6; }
.menubar nav { display: flex; gap: 38px; padding-left: 39px; }
.apple { width: 32px; }
.strong { font-weight: 700; font-size: 28px; }
.status { display: grid; grid-template-columns: 60px 60px 64px 58px 60px 42px 78px 68px 56px 62px 38px 98px 58px 80px 136px 190px 44px 88px 40px; padding-right: 44px; align-items: center; justify-items: center; white-space: nowrap; color: #e8e8e8; }
.pct { justify-self: end; padding-right: 3px; font-size: 24px; }

.titlebar { height: 34px; border-top: 2px solid #0c0f14; background: linear-gradient(#e8e8e8, #d0d0d0); border-bottom: 1px solid #aaa; position: relative; border-radius: 8px 8px 0 0; }
.titlebar h1 { text-align: center; font: 22px/31px Inter, sans-serif; color: #4a4a4a; }
.lights { position: absolute; left: 12px; top: 5px; display: flex; gap: 14px; }
.lights i { width: 22px; height: 22px; border-radius: 50%; }
.red { background: radial-gradient(circle, #4d0000 3px, #ff5f57 4px); border: 1px solid #e0443e; }
.amber { background: #ffbd2e; border: 1px solid #dea123; }
.green { background: #28c940; border: 1px solid #1aab29; }

.toolbar { height: 50px; background: #282828; display: flex; align-items: stretch; }
.tools { display: grid; grid-template-columns: 28px 46px 48px 56px 2px 64px 38px 60px 2px 64px 38px 62px 2px 62px 36px 64px 2px 62px 2px 60px; align-items: center; justify-items: center; }
.tools button { height: 42px; width: 100%; }
.tools .on { width: 46px; background: #151515; border: 2px solid #303030; border-radius: 6px; }
.grip { width: 5px; height: 38px; background: repeating-linear-gradient(#3a3a3a 0 2px, transparent 2px 4px); }
.sep { width: 2px; height: 42px; background: #2e2e2e; }
.options { display: flex; align-items: center; margin-left: 44px; border-left: 4px solid #333; padding-top: 3px; padding-left: 38px; flex: 1; }
.starbtn { width: 38px; height: 38px; background: #151515; border: 2px solid #303030; border-radius: 6px; }
.starbtn svg { color: #2d8ceb; }
.maskbtn { width: 28px; margin-left: 6px; }
.options > .sep { margin-left: 34px; margin-right: 17px; }
.fields { display: grid; grid-template-columns: 37px 48px 94px 48px 124px 53px 22px 8px 65px auto; align-items: center; white-space: nowrap; }
.strk { padding-left: 23px; }
.fill { height: 36px; background: #e6d200; border: 2px solid #a59a28; }
.stroke { height: 36px; background: #eaff00; border: 2px solid #b4bf28; }
.stroke i { width: 30px; height: 18px; background: #282828; border: 3px solid #000; }
.width { padding-left: 24px; }
.fields .sep { justify-self: end; }
.fields input { appearance: none; width: 27px; height: 28px; border: 3px solid #909090; border-radius: 4px; margin-left: 32px; }
.spaces { display: grid; grid-template-columns: 95px 63px 140px 177px 215px 164px 41px 4px 71px 386px; width: 1414px; padding-left: 45px; border-left: 2px solid #161616; align-items: center; flex: none; }
.spaces > button { justify-content: flex-start; padding-top: 5px; }
.spaces .cur, .curm svg { color: #3c9be0; }
.spaces .morebtn { padding-top: 0; }
.spaces .sep { width: 4px; height: 50px; background: #1a1a1a; }
.spaces .sync { padding-left: 8px; }
.field { display: flex; align-items: center; background: #151515; border: 2px solid #303030; border-radius: 6px; height: 38px; min-width: 0; }
.field input { flex: 1; min-width: 0; height: 100%; }
.help { padding-left: 9px; gap: 21px; margin-top: 5px; }
.help input::placeholder { color: #b8b8b8; opacity: 1; }

.upper { display: grid; grid-template-columns: 720px minmax(0, 1fr) 436px; gap: 8px; padding: 4px 2px 8px; min-height: 0; }
.panel { background: #282828; min-width: 0; min-height: 0; overflow: hidden; display: flex; flex-direction: column; }
.tabs { display: flex; height: 52px; flex: none; white-space: nowrap; }
.tab { padding-top: 8px; border-bottom: 4px solid transparent; display: flex; align-items: center; }
.active { border-color: #b8b8b8; }
.sw { width: 20px; height: 20px; flex: none; }
.blue { background: #667de0; }
.tan { background: #a69577; }
.project .active { margin-left: 22px; padding-left: 2px; color: #c8c8c8; width: 107px; justify-content: space-between; }
.fx { margin-left: 73px; gap: 20px; }
.fx .sw { margin-bottom: 4px; }
.info { display: flex; gap: 10px; padding: 16px 0 0 12px; height: 227px; flex: none; }
.thumb { width: 228px; height: 130px; background: #fff; border: 2px solid #000; flex: none; }
.meta { font-size: 19px; line-height: 26px; white-space: nowrap; margin-top: -4px; }
.meta b { display: flex; align-items: center; gap: 2px; font-size: 21px; line-height: 28px; }
.meta b svg { color: #fff; }
.psearch { margin: 0 13px; flex: none; padding-left: 11px; }
.items { margin-top: 13px; flex: 1; }
.c1 { width: 45px; } .c2 { width: 32px; } .c4 { width: 28px; }
.items th { height: 40px; background: #333; border-top: 2px solid #000; border-bottom: 2px solid #000; text-align: left; font-weight: 400; font-size: 18px; white-space: nowrap; overflow: hidden; }
.bar { background: linear-gradient(#111, #111) no-repeat right center / 2px 22px #333; }
.items th.bar { background: linear-gradient(#111, #111) no-repeat right center / 2px 22px #333; }
.items th svg { margin-left: 11px; }
.items th.nm { padding-left: 10px; }
.items th.ty { padding-left: 8px; }
.items td { height: 38px; border-bottom: 2px solid #222; }
.items .sel td { background: #333; }
.items td.edge, .items .sel td.edge { background: #242424; border: 0; }
.lab { display: block; width: 20px; height: 20px; margin-left: 11px; outline: 2px solid #1c1c1c; }
.mint { background: #aad0c8; }
.file { display: flex; align-items: center; height: 36px; padding-right: 6px; }
.ic { width: 34px; margin-left: 31px; display: flex; justify-content: center; flex: none; }
.file b { flex: 1; background: #9e9e9e; color: #232323; line-height: 34px; padding: 2px 0 0 4px; }
.file .txt { padding: 3px 0 0 4px; }
.pfoot { display: flex; height: 36px; flex: none; }
.pbtns { display: grid; grid-template-columns: 50px 50px 50px 54px 89px 48px; width: 344px; border-top: 2px solid #000; align-items: center; }
.bpc { height: 30px; background: #1d1d1d; border: 2px solid #303030; border-radius: 6px; font-size: 19px; }
.hscroll { width: 340px; background: #202020; padding: 2px; }
.hscroll i { display: block; width: 100px; height: 30px; border-radius: 15px; background: #353535; }
.pend { flex: 1; border-top: 2px solid #000; }

.ctab { margin-left: 22px; width: 345px; gap: 0; }
.x { font-size: 18px; width: 30px; }
.ctab svg { margin-left: 22px; margin-bottom: 6px; }
.ctab > span:not(.x) { margin-left: 18px; flex: 1; }
.ctab > svg:last-child { margin: 0; }
.ctab .sw { margin-bottom: 4px; }
.ftab { margin-left: 73px; }
.crumbs { height: 54px; flex: none; border-bottom: 2px solid #000; padding: 9px 0 0 39px; }
.crumbs button { width: 138px; height: 34px; background: #1a1a1a; border: 2px solid #2e2e2e; border-radius: 4px; color: #3c9be0; justify-content: flex-start; padding-left: 16px; }
.viewer { flex: 1; min-height: 0; background: #1e1e1e; display: flex; align-items: center; justify-content: center; }
.cfoot { height: 48px; flex: none; border-top: 2px solid #000; background: #282828; box-shadow: inset 0 2px #333; display: grid; grid-template-columns: 42px 44px 46px 137px 44px 46px 138px 48px 37px 49px 176px 46px 44px 213px 149px 45px 44px 46px 43px 48px auto; padding: 2px 0 0 4px; align-items: center; white-space: nowrap; }
.cfoot select { height: 38px; border: 2px solid #303030; border-radius: 6px; padding-left: 10px; }
.cfoot .gapl { margin-left: 7px; }
.cfoot .dark { width: 40px; height: 38px; justify-self: center; background: #161616; border-radius: 4px; }
.dark svg { color: #2d8ceb; }
.cfoot .dk2 { height: 38px; background: #1c1c1c; border-radius: 4px; }
.time { height: 38px; background: #1d1d1d; border: 2px solid #303030; border-radius: 6px; font-size: 21px; }
.cfoot .ap { border-left: 2px solid #2e2e2e; height: 30px; }
.cfoot a { padding-left: 3px; }

.side { display: grid; grid-template-columns: minmax(0, 1fr) 24px; min-height: 0; }
.vscroll { background: #202020; }
.vscroll i { display: block; width: 20px; height: 620px; margin: 2px 2px 0; border-radius: 10px; background: #303030; }
.fold { height: 60px; flex: none; margin: 0 2px; padding: 4px 0 0 22px; justify-content: flex-start; border-bottom: 4px solid #161616; }
.fold:first-child { height: 58px; }
.chead { display: flex; justify-content: space-between; align-items: center; height: 62px; flex: none; padding: 0 22px 0 24px; color: #c8c8c8; }
.char { padding: 12px 12px 0 10px; }
.fonts { display: grid; grid-template-columns: 246px 58px 86px; height: 98px; border-bottom: 2px solid #303030; }
.selects { display: grid; gap: 10px; align-content: start; }
.fsel { height: 38px; border: 2px solid #303030; border-radius: 6px; padding-left: 12px; background-color: #151515; background-position: right 6px center; background-image: url("data:image/svg+xml,%3Csvg xmlns='http://www.w3.org/2000/svg' width='28' height='34'%3E%3Cpath d='M1 0v34' stroke='%23303030' stroke-width='2'/%3E%3Cpath d='M11 13l7 7 7-7' fill='none' stroke='%23c0c0c0' stroke-width='2'/%3E%3C/svg%3E"); }
.picks { display: flex; flex-direction: column; gap: 10px; padding: 4px 0 0 9px; }
.swatches { position: relative; }
.solid { position: absolute; left: 0; top: 0; width: 60px; height: 60px; background: #ffb800; border: 2px solid #000; }
.outline { position: absolute; left: 26px; top: 26px; }
.swap { position: absolute; left: 62px; top: 3px; }
.none { position: absolute; left: 2px; top: 60px; }
.vals { display: grid; grid-template-columns: 51px 89px 70px 64px 92px 1fr; height: 42px; align-items: center; white-space: nowrap; }
.vals.top { margin-top: 4px; }
.vals > svg:nth-child(3n) { color: #8f8f8f; }
.dim { color: #555; }
.last { border-top: 2px solid #303030; margin-top: 10px; grid-template-columns: 51px 89px 23px 1fr; height: 60px; }
.last select { height: 42px; border: 2px solid #303030; border-radius: 6px; }

.timeline { margin: 0 2px 2px; border: 2px solid #2f7fd0; background: #282828; display: flex; flex-direction: column; min-height: 0; }
.tbody { flex: 1; min-height: 0; display: grid; grid-template-columns: 1584px minmax(0, 1fr) 32px; }
.left { overflow: hidden; }
.ttab { display: flex; align-items: center; height: 52px; padding-left: 20px; color: #c8c8c8; }
.ttab .x { color: #909090; }
.ttab .sw { margin-bottom: 4px; }
.ttab > span:not(.x) { margin: 0 20px 0 22px; }
.tctl { display: flex; height: 72px; }
.tc { width: 200px; padding: 9px 0 0 20px; white-space: nowrap; }
.tc b { display: block; font-size: 30px; line-height: 34px; color: #3c9be0; padding-left: 4px; font-weight: 700; }
.tc span { display: block; font-size: 19px; line-height: 24px; color: #1f639c; }
.tsearch { width: 982px; margin-top: 16px; padding-left: 10px; }
.tbtns { display: grid; grid-template-columns: 66px 68px 68px 38px 64px 72px; padding: 0 0 0 14px; align-items: center; flex: 1; height: 72px; }
.layers th { height: 40px; border-top: 2px solid #000; border-bottom: 2px solid #000; background-color: #333; text-align: left; font-weight: 400; font-size: 18px; white-space: nowrap; }
.l1 { width: 36px; } .l2 { width: 30px; } .l3 { width: 38px; } .l4 { width: 64px; } .l5 { width: 66px; } .l6 { width: 342px; } .l7 { width: 382px; } .l8 { width: 148px; } .l9 { width: 38px; } .l10 { width: 146px; }
.layers .ctr { text-align: center; }
.ctr svg { margin: 0 auto; }
.layers th:first-child svg { margin-left: 11px; }
.lk svg { margin-left: 6px; }
.tg svg { margin-left: 28px; }
.num { padding-left: 16px; }
.ln { padding-left: 12px; }
.md { padding-left: 10px; }
.pl span { display: block; margin-left: 10px; background: linear-gradient(#111, #111) no-repeat 222px center / 2px 22px; }
.sws { display: grid; grid-template-columns: repeat(8, 26px); gap: 4px; padding-left: 8px; align-items: center; justify-items: center; }
.sws em { font: italic 26px/26px "Liberation Serif", serif; color: #b8b8b8; }
.layers td { height: 34px; background: #303030; border-bottom: 2px solid #222; line-height: 30px; }
.layers .sel td { background: #494949; border-bottom-color: #333; }
.layers .prop td { background: #282828; }
.box { width: 26px; height: 26px; background: #1e1e1e; }
.sel .box { background: #333; }
.e { margin-left: 8px; }
.s { margin-left: 2px; }
.t { margin-left: 6px; }
.dimmed svg { color: #777; }
.lbl { display: grid; grid-template-columns: 23px 24px; padding-left: 13px; align-items: center; justify-items: start; }
.lbl i { width: 24px; height: 26px; background: #667de0; }
.layers .no { font-weight: 700; padding-left: 14px; }
.lname { display: flex; align-items: center; height: 32px; padding: 0 2px 0 7px; }
.mk { width: 27px; height: 28px; margin: 0 5px 0 7px; background: #1e1e1e; display: flex; align-items: center; justify-content: center; }
.lname b { flex: 1; line-height: 32px; padding-left: 5px; }
.sel .lname b { background: #9e9e9e; color: #232323; }
.layers select { display: block; height: 28px; font-size: 20px; line-height: 26px; padding-left: 12px; }
.layers .mode { width: 139px; margin-left: 5px; }
.layers .trk { width: 130px; margin-left: 6px; }
.par { display: flex; align-items: center; padding-left: 9px; gap: 12px; }
.par select { width: 179px; }
.pr { padding-left: 34px; }
.nav { display: grid; grid-template-columns: repeat(3, 31px); padding-left: 4px; align-items: center; justify-items: center; }
.pname { display: flex; align-items: center; height: 32px; padding-left: 40px; }
.pname > span:last-child { margin-left: 16px; font-size: 20px; padding-top: 3px; }
.sw8 { width: 30px; height: 30px; background: #222; display: flex; align-items: center; justify-content: center; margin-right: 9px; }
.sw8 svg { color: #2d8ceb; }
.layers .val { padding-left: 10px; }

.right { position: relative; margin-top: 62px; display: flex; flex-direction: column; overflow: hidden; border-left: 2px solid #000; border-right: 2px solid #111; min-height: 0; margin-bottom: 2px; }
.inner, .span { position: relative; margin: 0 14px; }
.navbar { height: 22px; padding: 4px 0 2px; background: #000; position: relative; }
.navbar .span { height: 16px; background: #656565; }
.navbar::before, .navbar::after, .work::before, .work::after { content: ""; position: absolute; background: #2d8ceb; }
.navbar::before { left: 0; top: 4px; width: 12px; height: 16px; border-radius: 8px 0 0 8px; }
.navbar::after { right: 0; top: 4px; width: 12px; height: 16px; border-radius: 0 8px 8px 0; }
.now { position: absolute; top: 0; width: 4px; margin-left: -2px; height: 16px; background: #2d8ceb; border: solid #8a8a8a; border-width: 0 1px; }
.ruler { height: 38px; background: #282828; }
.tick { position: absolute; top: 2px; width: 100px; margin-left: -49px; text-align: center; height: 36px; font-size: 18px; line-height: 24px; }
.tick::after { content: ""; position: absolute; left: 49px; bottom: 0; width: 2px; height: 16px; background: #909090; }
.tick.half::after { height: 10px; }
.work { height: 34px; background: #161616; border: solid #000; border-width: 2px 0; position: relative; }
.work .span { height: 30px; background: #5f5f5f; border-top: 2px solid #747474; }
.work::before { left: 2px; top: 0; width: 10px; height: 30px; border-radius: 6px 0 0 6px; }
.work::after { right: 2px; top: 0; width: 10px; height: 30px; border-radius: 0 6px 6px 0; }
.cache { height: 8px; background: #262626; border-bottom: 2px solid #000; }
.cache i { position: absolute; top: 0; height: 6px; background: #18bd22; }
.tracks { flex: 1; min-height: 0; display: flex; flex-direction: column; background: #282828; }
.row { height: 34px; flex: none; border-bottom: 2px solid #222; }
.row .inner { height: 32px; background: #333; }
.lay { background: #303030; }
.lay .inner { background: #3a3a3a; }
.row.sel { background: #494949; }
.clip { position: absolute; left: 0; top: 0; height: 32px; background: #525d90; border-top: 2px solid #626ca0; border-bottom: 2px solid #434c7c; }
.early { left: -14px; }
.sel .clip { background: linear-gradient(#7283d8, #4059cb); border-top-color: #aab6e8; border-bottom: 0; border-left: 2px solid #aab6e8; }
.kf { position: absolute; top: 8px; margin-left: -9px; }
.rest { flex: 1; display: flex; }
.rest .inner { flex: 1; background: #333; }
.over { position: absolute; left: 14px; right: 14px; top: 32px; bottom: 0; pointer-events: none; }
.line { position: absolute; top: 26px; bottom: 0; width: 2px; margin-left: -1px; background: #2f86dc; }
.line svg { position: absolute; left: -10px; top: -26px; }
.gutter { display: flex; flex-direction: column; background: #242424; }
.g1 { height: 164px; border-bottom: 2px solid #000; background: #282828; padding: 128px 0 0 6px; }
.g2 { height: 32px; background: #282828; padding-top: 4px; }
.tfoot { height: 34px; flex: none; background: #242424; }
.tf1 { width: 1800px; height: 34px; border-top: 2px solid #000; background: #282828; display: flex; align-items: center; padding-left: 5px; }
.tf1 button { width: 36px; height: 30px; }
.tf1 button svg { color: #3184d6; }
.tf1 .g svg { color: #b0b0b0; }
.zoomer { display: flex; align-items: center; margin-left: 1484px; gap: 20px; }
.zoomer input { appearance: none; width: 100px; height: 20px; background: linear-gradient(#444, #444) no-repeat center / 100% 4px; }
.zoomer input::-webkit-slider-thumb { appearance: none; width: 20px; height: 20px; border-radius: 50%; border: 4px solid #909090; background: #282828; }
</style>
